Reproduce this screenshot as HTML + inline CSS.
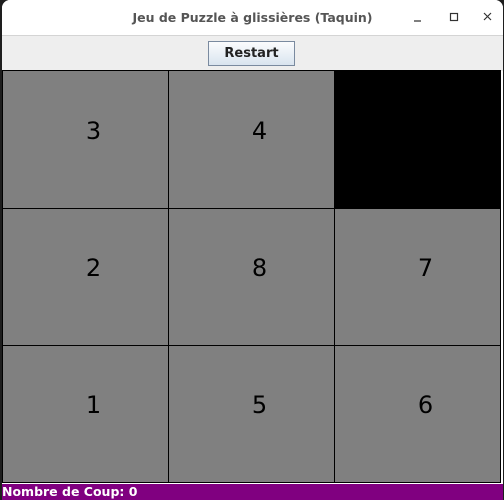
<!DOCTYPE html>
<html><head><style>
html,body{margin:0;padding:0;width:504px;height:500px;overflow:hidden;background:#1e1e1e;font-family:"Liberation Sans","DejaVu Sans",sans-serif}
#win{position:absolute;left:2px;top:0;width:501px;height:500px;background:#fff;border-radius:8px 8px 0 0;overflow:hidden}
#title{position:absolute;left:0;top:0;width:501px;height:35px;background:#fff;border-bottom:1px solid #d4d4d4}
#title .t{position:absolute;left:0;width:501px;top:10px;text-align:center;font-family:"DejaVu Sans",sans-serif;font-weight:bold;font-size:12.5px;color:#555;}
#tool{position:absolute;left:0;top:36px;width:501px;height:35px;background:#eeeeee}
#btn{position:absolute;left:206px;top:5px;width:87px;height:25px;border:1px solid #7a8a9f;box-sizing:border-box;background:linear-gradient(#fbfcfd,#d9e4ef);font-family:"DejaVu Sans",sans-serif;font-weight:bold;font-size:13px;color:#222;text-align:center;line-height:23px}
#grid{position:absolute;left:0;top:70px;width:499px;height:413px;background:#000}
.c{position:absolute;background:#808080;font-family:"DejaVu Sans",sans-serif;font-size:24px;color:#000;display:flex;align-items:center;justify-content:center;box-sizing:border-box;padding:0 0 18px 16px}
#status{position:absolute;left:0;top:484px;width:501px;height:16px;background:#800080;color:#fff;font-family:"DejaVu Sans",sans-serif;font-weight:bold;font-size:12.5px;line-height:15px;padding-left:0}
</style></head><body>
<div id="win">
<div id="title"><div class="t">Jeu de Puzzle à glissières (Taquin)</div>
<svg style="position:absolute;left:404px;top:11px" width="90" height="14">
<line x1="8" y1="10" x2="15" y2="10" stroke="#333" stroke-width="1.2"/>
<rect x="44.5" y="2.5" width="7" height="7" fill="none" stroke="#333" stroke-width="1.2"/>
<path d="M78 2 L85 9 M85 2 L78 9" stroke="#333" stroke-width="1.2"/>
</svg></div>
<div id="tool"><div id="btn">Restart</div></div>
<div id="grid">
<div class="c" style="left:1px;top:1px;width:165px;height:137px">3</div>
<div class="c" style="left:167px;top:1px;width:165px;height:137px">4</div>
<div class="c" style="left:333px;top:1px;width:165px;height:137px;background:#000"></div>
<div class="c" style="left:1px;top:139px;width:165px;height:136px">2</div>
<div class="c" style="left:167px;top:139px;width:165px;height:136px">8</div>
<div class="c" style="left:333px;top:139px;width:165px;height:136px">7</div>
<div class="c" style="left:1px;top:276px;width:165px;height:136px">1</div>
<div class="c" style="left:167px;top:276px;width:165px;height:136px">5</div>
<div class="c" style="left:333px;top:276px;width:165px;height:136px">6</div>
</div>
<div id="status">Nombre de Coup: 0</div>
</div>
</body></html>
